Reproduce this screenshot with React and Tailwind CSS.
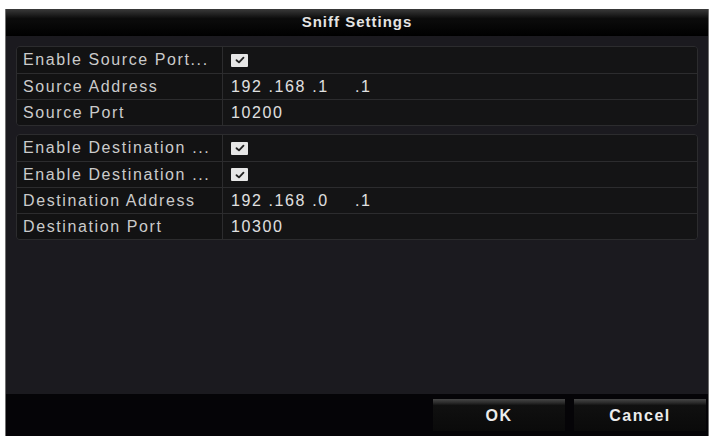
import React from "react";

const font = { fontFamily: '"Liberation Sans", Arial, sans-serif' };

function Check() {
  return (
    <div className="w-[17px] h-[13px] bg-[#e6e6e6] rounded-[1px] flex items-center justify-center">
      <svg width="10" height="8" viewBox="0 0 10 8">
        <path d="M1.5 4.2 L4 6.4 L8.5 1.6" stroke="#222" strokeWidth="1.8" fill="none" strokeLinecap="round" strokeLinejoin="round" />
      </svg>
    </div>
  );
}

function Row({ label, children, first }) {
  return (
    <div className={`flex h-[26px] ${first ? "" : "border-t border-[#2c2c2e]"}`}>
      <div className="w-[206px] shrink-0 border-r border-[#2c2c2e] bg-[#121213] flex items-center pl-[6px] text-[16px] tracking-[1.6px] text-[#cbcbcb] whitespace-nowrap overflow-hidden">
        {label}
      </div>
      <div className="flex-1 bg-[#141415] flex items-center pl-[8px] text-[16px] tracking-[1.6px] text-[#e0e0e0] whitespace-nowrap">
        {children}
      </div>
    </div>
  );
}

function Ip({ a }) {
  return (
    <div className="flex">
      <span className="w-[124px]">{a}</span>
      <span>.1</span>
    </div>
  );
}

export default function App() {
  return (
    <div className="w-[715px] h-[437px] bg-white pt-[9px] pl-[5px]" style={font}>
      <div className="w-[704px] h-[427px] bg-[#1b1a1f] border-l border-r border-[#707070] flex flex-col">
        <div className="h-[27px] bg-[linear-gradient(#3a3a3a,#0c0c0c_35%,#000)] flex items-center justify-center text-[15px] font-bold tracking-[1px] text-[#e4e4e4]">
          Sniff Settings
        </div>
        <div className="flex-1 pl-[10px] pr-[10px] pt-[10px] flex flex-col gap-[8px]">
          <div className="border border-[#2c2c2e] rounded-[4px] overflow-hidden">
            <Row label="Enable Source Port..." first>
              <Check />
            </Row>
            <Row label="Source Address">
              <Ip a="192 .168 .1" />
            </Row>
            <Row label="Source Port">10200</Row>
          </div>
          <div className="border border-[#2c2c2e] rounded-[4px] overflow-hidden">
            <Row label="Enable Destination ..." first>
              <Check />
            </Row>
            <Row label="Enable Destination ...">
              <Check />
            </Row>
            <Row label="Destination Address">
              <Ip a="192 .168 .0" />
            </Row>
            <Row label="Destination Port">10300</Row>
          </div>
        </div>
        <div className="h-[42px] bg-[#050407] flex items-center justify-end gap-[9px] pr-[2px]">
          <button className="w-[132px] h-[32px] bg-[linear-gradient(#474747,#2a2a2a_12%,#101010_20%,#0a0a0a)] text-[16px] font-bold tracking-[1.5px] text-[#ececec] pt-[2px]">
            OK
          </button>
          <button className="w-[132px] h-[32px] bg-[linear-gradient(#474747,#2a2a2a_12%,#101010_20%,#0a0a0a)] text-[16px] font-bold tracking-[1.5px] text-[#ececec] pt-[2px]">
            Cancel
          </button>
        </div>
      </div>
    </div>
  );
}
